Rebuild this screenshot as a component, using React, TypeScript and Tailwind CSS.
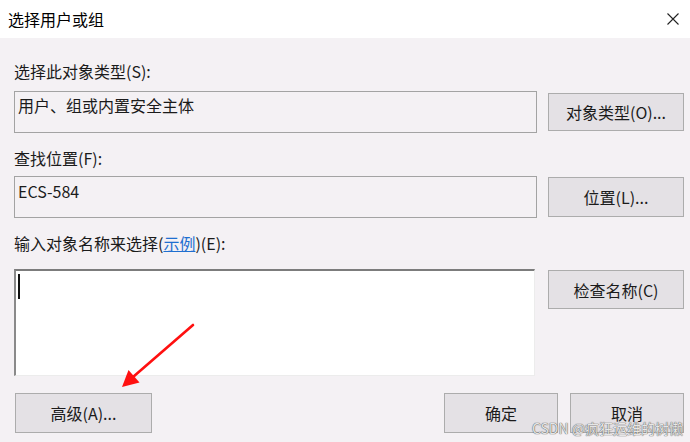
import React from "react";

const font = "font-['Noto_Sans_CJK_SC','Noto_Sans',sans-serif]";

function Btn({ children, className = "" }: { children: React.ReactNode; className?: string }) {
  return (
    <div
      className={`flex items-center justify-center bg-[#e4e1e5] border border-[#acacac] text-[16px] text-[#1b1b1b] ${className}`}
    >
      {children}
    </div>
  );
}

export default function App() {
  return (
    <div className={`relative w-[690px] h-[442px] bg-[#f4f1f4] flex flex-col overflow-hidden ${font} text-[#1b1b1b]`}>
      <div className="h-[38px] bg-white flex items-center justify-between pl-[8px] pr-[6px]">
        <span className="text-[16px] leading-[22px] text-black">选择用户或组</span>
        <svg width="14" height="14" viewBox="0 0 14 14" className="mr-[4px]">
          <path d="M1.5 1.5 L12.5 12.5 M12.5 1.5 L1.5 12.5" stroke="#222" strokeWidth="1.1" fill="none" />
        </svg>
      </div>

      <div className="flex flex-col pl-[14px] pr-[6px]">
        <div className="mt-[22px] h-[22px] leading-[22px] text-[16px]">选择此对象类型(S):</div>
        <div className="mt-[9px] flex gap-[11px]">
          <div className="w-[523px] h-[42px] border border-[#a3a3a3] pl-[3px] pt-[2px] text-[16px] leading-[22px]">
            用户、组或内置安全主体
          </div>
          <Btn className="mt-[2px] w-[136px] h-[38px]">对象类型(O)...</Btn>
        </div>

        <div className="mt-[14px] h-[22px] leading-[22px] text-[16px]">查找位置(F):</div>
        <div className="mt-[7px] flex gap-[11px]">
          <div className="w-[523px] h-[42px] border border-[#a3a3a3] pl-[3px] pt-[3px] text-[16px] leading-[22px]">
            ECS-584
          </div>
          <Btn className="mt-[1px] w-[136px] h-[40px]">位置(L)...</Btn>
        </div>

        <div className="mt-[14px] h-[22px] leading-[22px] text-[16px]">
          输入对象名称来选择(<span className="text-[#1f6fd0] underline">示例</span>)(E):
        </div>
        <div className="mt-[15px] flex gap-[11px]">
          <div className="w-[521px] h-[107px] bg-white border-t-2 border-l-2 border-t-[#7c7c7c] border-l-[#8a8a8a] border-r border-b border-r-[#ececec] border-b-[#ececec] pl-[2px] pt-[3px]">
            <div className="w-[2px] h-[25px] bg-[#111]" />
          </div>
          <Btn className="mt-[1px] ml-[2px] w-[136px] h-[39px]">检查名称(C)</Btn>
        </div>

        <div className="mt-[17px] flex">
          <Btn className="ml-[1px] w-[137px] h-[40px]">高级(A)...</Btn>
          <div className="flex-1" />
          <Btn className="w-[114px] h-[40px]">确定</Btn>
          <Btn className="ml-[12px] w-[114px] h-[40px]">取消</Btn>
        </div>
      </div>

      <svg className="absolute left-0 top-0 pointer-events-none" width="690" height="442" viewBox="0 0 690 442">
        <line x1="193" y1="325" x2="133" y2="377" stroke="#ff1010" strokeWidth="2.6" strokeLinecap="round" />
        <polygon points="122,387 139.5,382.5 128.5,370" fill="#ff1010" />
      </svg>

      <div className="absolute right-[7px] bottom-[5px] text-[14px] leading-[18px] text-[#e6e6e6] [text-shadow:0_0_1px_#555,0_0_1px_#555]">
        CSDN @疯狂运维的树懒
      </div>
    </div>
  );
}
